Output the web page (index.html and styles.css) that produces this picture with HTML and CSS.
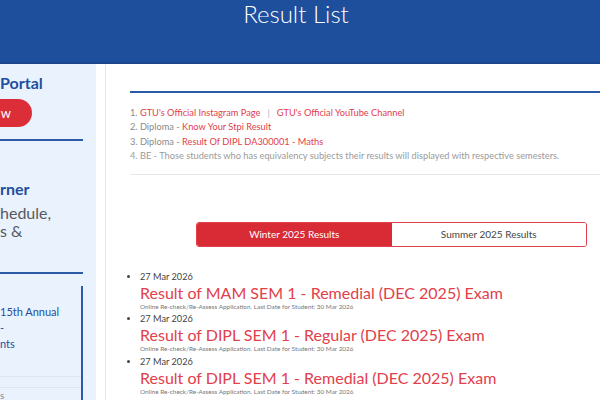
FILE: index.html
```html
<!DOCTYPE html>
<html lang="en">
<head>
<meta charset="utf-8">
<title>Result List</title>
<link rel="stylesheet" href="styles.css">
</head>
<body>
<header class="topbar">
  <h1 class="page-title">Result List</h1>
</header>
<div class="layout">
  <aside class="sidebar">
    <div class="side-inner">
      <section class="side-block block-portal">
        <div class="side-heading line-portal">Portal</div>
        <div class="btn-row"><a class="pill-btn">w</a></div>
      </section>
      <section class="side-block block-corner">
        <div class="side-heading line-corner">rner</div>
        <div class="side-text line-sched">hedule,</div>
        <div class="side-text line-res">s &amp;</div>
      </section>
      <section class="news-box">
        <div class="news-item">
          <div class="news-line nl-1">15th Annual</div>
          <div class="news-line nl-2">-</div>
          <div class="news-line nl-3">nts</div>
        </div>
        <div class="news-item news-item-next">
          <div class="news-line nl-4">s</div>
        </div>
      </section>
    </div>
  </aside>
  <main class="main">
    <div class="content">
      <ol class="notices">
        <li><a class="red-link">GTU's Official Instagram Page</a><span class="sep">|</span><a class="red-link">GTU's Official YouTube Channel</a></li>
        <li>Diploma - <a class="red-link">Know Your Stpi Result</a></li>
        <li>Diploma - <a class="red-link">Result Of DIPL DA300001 - Maths</a></li>
        <li class="muted">BE - Those students who has equivalency subjects their results will displayed with respective semesters.</li>
      </ol>
      <div class="tabs">
        <div class="tab tab-active">Winter 2025 Results</div>
        <div class="tab">Summer 2025 Results</div>
      </div>
      <ul class="results">
        <li class="result">
          <div class="r-date">27 Mar 2026</div>
          <a class="r-title">Result of MAM SEM 1 - Remedial (DEC 2025) Exam</a>
          <div class="r-sub">Online Re-check/Re-Assess Application. Last Date for Student: 30 Mar 2026</div>
        </li>
        <li class="result">
          <div class="r-date">27 Mar 2026</div>
          <a class="r-title">Result of DIPL SEM 1 - Regular (DEC 2025) Exam</a>
          <div class="r-sub">Online Re-check/Re-Assess Application. Last Date for Student: 30 Mar 2026</div>
        </li>
        <li class="result">
          <div class="r-date">27 Mar 2026</div>
          <a class="r-title">Result of DIPL SEM 1 - Remedial (DEC 2025) Exam</a>
          <div class="r-sub">Online Re-check/Re-Assess Application. Last Date for Student: 30 Mar 2026</div>
        </li>
      </ul>
    </div>
  </main>
</div>
</body>
</html>
```
FILE: styles.css
```css
html, body {
  margin: 0;
  padding: 0;
  overflow: hidden;
  width: 600px;
  height: 400px;
  background: #ffffff;
  font-family: "Lato", "Open Sans", sans-serif;
}

.topbar {
  box-sizing: border-box;
  height: 64px;
  background: #1e4f9d;
  border-bottom: 2px solid #1a458c;
  display: flex;
  justify-content: center;
  padding-right: 8px;
}

.page-title {
  margin: 0;
  padding-top: 0;
  font-size: 24px;
  line-height: 28px;
  font-weight: 300;
  color: #ffffff;
}

.layout {
  display: flex;
  height: 336px;
}

/* ---------- sidebar ---------- */
.sidebar {
  flex: none;
  width: 96px;
  background: #eaf2fd;
  overflow: hidden;
}

.side-inner {
  width: 83px;
}

.side-block {
  border-bottom: 2px solid #2c5ba6;
}

.block-portal {
  padding-top: 9px;
  padding-bottom: 12px;
}

.side-heading {
  font-size: 16px;
  line-height: 20px;
  font-weight: 700;
  color: #1e4f9d;
  text-align: right;
  white-space: nowrap;
}

.line-portal { padding-right: 46px; }

.btn-row {
  display: flex;
  justify-content: flex-end;
  margin-top: 6px;
  padding-right: 51px;
}

.pill-btn {
  flex: none;
  display: block;
  width: 60px;
  height: 28px;
  margin-left: -60px;
  box-sizing: border-box;
  padding-right: 21px;
  border-radius: 14px;
  background: #dc2e38;
  color: #ffffff;
  font-size: 13px;
  line-height: 28px;
  text-align: right;
}

.block-corner {
  padding-top: 38px;
  padding-bottom: 32px;
}

.line-corner { padding-right: 57px; }

.side-text {
  font-size: 16px;
  line-height: 18px;
  color: #555a60;
  text-align: right;
  white-space: nowrap;
}

.line-sched { margin-top: 5px; padding-right: 40px; }
.line-res { padding-right: 61px; }

.news-box {
  margin-top: 12px;
  border-right: 2px solid #2c5ba6;
  height: 120px;
}

.news-item {
  padding-top: 18px;
  padding-bottom: 24px;
  border-bottom: 1px solid #dce6f3;
}

.news-item-next {
  margin-top: 10px;
  padding-top: 3px;
  border-top: 1px solid #dce6f3;
  border-bottom: none;
}

.news-line {
  font-size: 11px;
  line-height: 16px;
  color: #1e4f9d;
  text-align: right;
  white-space: nowrap;
}

.nl-1 { padding-right: 31px; }
.nl-2 { padding-right: 79px; }
.nl-3 { padding-right: 70px; }
.nl-4 { padding-right: 78px; color: #888; line-height: 9px; font-size: 10px; }

/* ---------- main ---------- */
.main {
  flex: none;
  margin-left: 9px;
  border-left: 1px solid #e4e4e4;
  padding-left: 24px;
  padding-top: 27px;
}

.content {
  width: 523px;
}

.notices {
  margin: 0;
  padding: 13px 0 10px 0;
  list-style: decimal inside;
  border-top: 2px solid #2c5ba6;
  border-bottom: 1px solid #e8e8e8;
  font-size: 9.25px;
  line-height: 14.4px;
  color: #8a8a8a;
  white-space: nowrap;
}

.red-link {
  color: #e2404b;
}

.sep {
  color: #a9b6cc;
  margin: 0 7px;
}

.muted {
  color: #9a9a9a;
}

.tabs {
  display: flex;
  width: 391px;
  height: 25px;
  margin: 47px auto 0 auto;
  box-sizing: border-box;
  border: 1px solid #e2404b;
  border-radius: 3px;
  overflow: hidden;
}

.tab {
  flex: 1;
  display: flex;
  align-items: center;
  justify-content: center;
  font-size: 10px;
  color: #444444;
  background: #ffffff;
}

.tab-active {
  background: #d92b35;
  color: #ffffff;
}

.results {
  margin: 24px 0 0 0;
  padding-left: 10px;
  list-style: disc;
  color: #444444;
  font-size: 9.2px;
  line-height: 12px;
}

.result {
  margin-bottom: 1.5px;
}

.r-date {
  font-size: 9.2px;
  line-height: 12px;
  color: #444444;
}

.r-title {
  display: block;
  font-size: 16px;
  line-height: 19px;
  color: #e2404b;
  white-space: nowrap;
}

.r-sub {
  font-size: 6.4px;
  line-height: 10px;
  color: #777777;
  white-space: nowrap;
}
```
